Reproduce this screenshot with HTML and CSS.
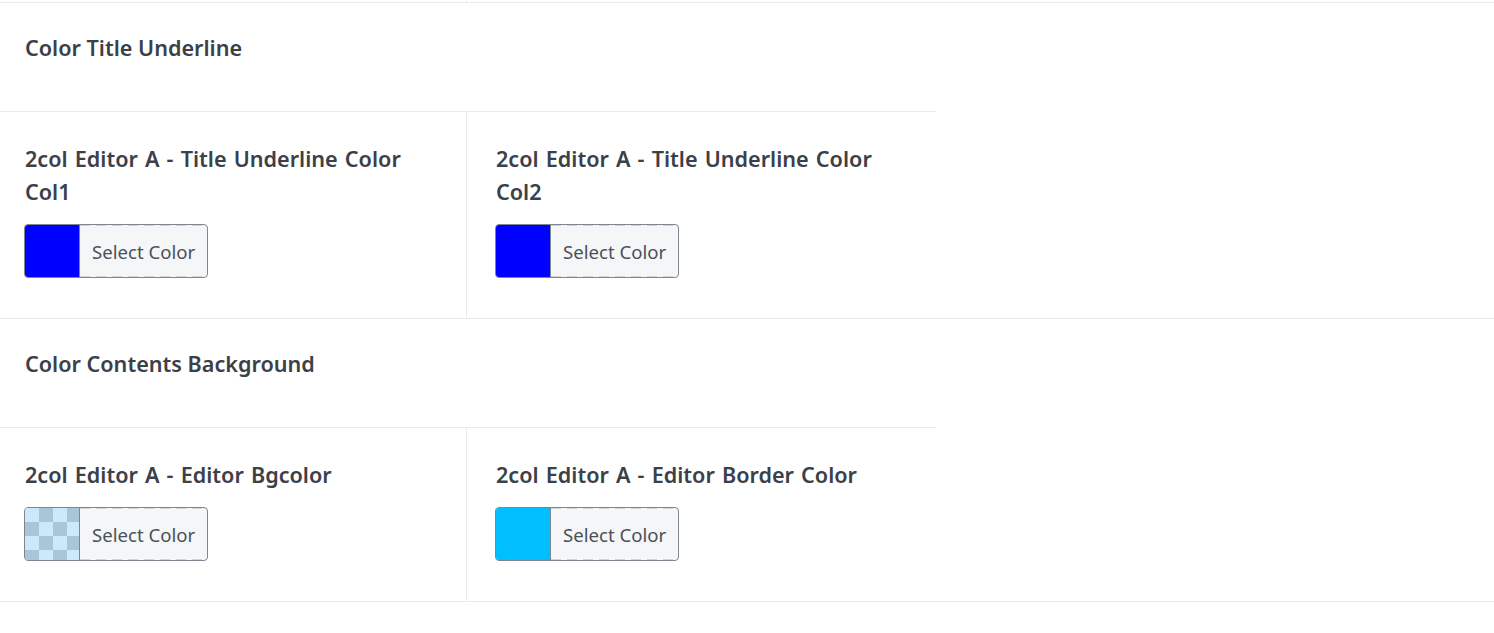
FILE: index.html
```html
<!DOCTYPE html>
<html lang="en">
<head>
<meta charset="utf-8">
<title>Colors</title>
<link rel="stylesheet" href="styles.css">
</head>
<body>
<div class="stub"><div class="stub-cell"></div></div>
<div class="panel">
  <div class="section"><h3 class="section-title">Color Title Underline</h3></div>
  <div class="row">
    <div class="cell cell-left">
      <div class="label">2col Editor A - Title Underline Color Col1</div>
      <div class="picker"><span class="swatch swatch-blue"></span><span class="picker-text">Select Color</span></div>
    </div>
    <div class="cell cell-right">
      <div class="label">2col Editor A - Title Underline Color Col2</div>
      <div class="picker"><span class="swatch swatch-blue"></span><span class="picker-text">Select Color</span></div>
    </div>
  </div>
  <div class="section"><h3 class="section-title">Color Contents Background</h3></div>
  <div class="row">
    <div class="cell cell-left">
      <div class="label">2col Editor A - Editor Bgcolor</div>
      <div class="picker"><span class="swatch swatch-checker"></span><span class="picker-text">Select Color</span></div>
    </div>
    <div class="cell cell-right">
      <div class="label">2col Editor A - Editor Border Color</div>
      <div class="picker"><span class="swatch swatch-sky"></span><span class="picker-text">Select Color</span></div>
    </div>
  </div>
</div>
</body>
</html>
```
FILE: styles.css
```css
html, body {
  margin: 0;
  padding: 0;
  background: #ffffff;
  font-family: "Noto Sans", "Open Sans", sans-serif;
  color: #3b4049;
}
.stub {
  height: 2px;
  width: 936px;
  display: grid;
  grid-template-columns: 467px 1fr;
}
.stub-cell {
  border-right: 1px solid #ebebeb;
}
.panel {
  border-top: 1px solid #ebebeb;
}
.section {
  width: 936px;
  height: 109px;
  box-sizing: border-box;
  border-bottom: 1px solid #ebebeb;
  padding: 30px 25px 0;
}
.section-title {
  margin: 0;
  font-size: 21.6px;
  line-height: 30px;
  font-weight: 600;
}
.row {
  display: grid;
  grid-template-columns: 467px 469px;
  border-bottom: 1px solid #ebebeb;
}
.cell {
  padding: 30px 0 40px;
}
.cell-left {
  padding-left: 24px;
  padding-right: 40px;
  border-right: 1px solid #ebebeb;
}
.cell-right {
  padding-left: 28px;
  padding-right: 40px;
}
.label {
  font-size: 21.6px;
  line-height: 33px;
  font-weight: 600;
  word-spacing: 1.5px;
  padding-left: 1px;
  margin-bottom: 16px;
}
.picker {
  display: flex;
  width: max-content;
  height: 54px;
  box-sizing: border-box;
  border: 1px solid #80868f;
  border-radius: 4px;
  overflow: hidden;
  background: #f4f6f7;
}
.swatch {
  width: 54px;
  height: 100%;
}
.swatch-blue { background: #0000ff; }
.swatch-sky { background: #00bfff; }
.swatch-checker {
  background: repeating-conic-gradient(#a8c6d8 0 25%, #cce9fb 0 50%) 0 0 / 28px 28px;
}
.picker-text {
  display: flex;
  align-items: center;
  padding: 0 12px;
  font-size: 18.6px;
  font-weight: 400;
  color: #4b5159;
  border-left: 1px solid #80868f;
  background-image:
    repeating-linear-gradient(90deg, #d0d4d8 0 10px, transparent 10px 16px),
    repeating-linear-gradient(90deg, #d0d4d8 0 10px, transparent 10px 16px);
  background-size: 100% 1px, 100% 1px;
  background-position: 0 0, 0 100%;
  background-repeat: no-repeat;
}
```
